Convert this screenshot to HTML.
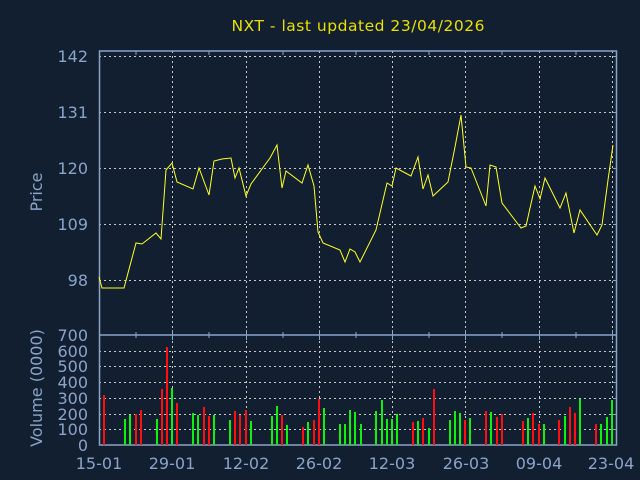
<!DOCTYPE html>
<html><head><meta charset="utf-8"><style>
html,body{margin:0;padding:0;background:#121f31;}
svg{display:block;}
text{font-family:"DejaVu Sans","Liberation Sans",sans-serif;}
</style></head><body>
<svg width="640" height="480" viewBox="0 0 640 480" xmlns="http://www.w3.org/2000/svg">
<rect width="640" height="480" fill="#121f31"/>
<text x="358" y="31" fill="#e8e000" font-size="15.5" text-anchor="middle" textLength="253">NXT - last updated 23/04/2026</text>
<g stroke="#c8c8c8" stroke-width="1" stroke-dasharray="2,3" fill="none">
<line x1="99" y1="56.5" x2="617" y2="56.5"/>
<line x1="99" y1="112.5" x2="617" y2="112.5"/>
<line x1="99" y1="168.5" x2="617" y2="168.5"/>
<line x1="99" y1="224.5" x2="617" y2="224.5"/>
<line x1="99" y1="280.5" x2="617" y2="280.5"/>
<line x1="99" y1="351.5" x2="617" y2="351.5"/>
<line x1="99" y1="366.5" x2="617" y2="366.5"/>
<line x1="99" y1="382.5" x2="617" y2="382.5"/>
<line x1="99" y1="398.5" x2="617" y2="398.5"/>
<line x1="99" y1="414.5" x2="617" y2="414.5"/>
<line x1="99" y1="429.5" x2="617" y2="429.5"/>
<line x1="172.5" y1="51" x2="172.5" y2="445"/>
<line x1="246.5" y1="51" x2="246.5" y2="445"/>
<line x1="319.5" y1="51" x2="319.5" y2="445"/>
<line x1="392.5" y1="51" x2="392.5" y2="445"/>
<line x1="465.5" y1="51" x2="465.5" y2="445"/>
<line x1="539.5" y1="51" x2="539.5" y2="445"/>
<line x1="612.5" y1="51" x2="612.5" y2="445"/>
</g>
<g stroke="#8aa4c8" stroke-width="1.5" fill="none">
<rect x="99.5" y="51" width="517" height="394"/>
<line x1="99" y1="335" x2="617" y2="335"/>
</g>
<g stroke="#8aa4c8" stroke-width="1">
<line x1="136" y1="51" x2="136" y2="55"/><line x1="209" y1="51" x2="209" y2="55"/><line x1="283" y1="51" x2="283" y2="55"/><line x1="356" y1="51" x2="356" y2="55"/><line x1="429" y1="51" x2="429" y2="55"/><line x1="502" y1="51" x2="502" y2="55"/><line x1="576" y1="51" x2="576" y2="55"/>
<line x1="136" y1="332" x2="136" y2="338"/><line x1="209" y1="332" x2="209" y2="338"/><line x1="283" y1="332" x2="283" y2="338"/><line x1="356" y1="332" x2="356" y2="338"/><line x1="429" y1="332" x2="429" y2="338"/><line x1="502" y1="332" x2="502" y2="338"/><line x1="576" y1="332" x2="576" y2="338"/>
<line x1="172.5" y1="330" x2="172.5" y2="340"/><line x1="246.5" y1="330" x2="246.5" y2="340"/><line x1="319.5" y1="330" x2="319.5" y2="340"/><line x1="392.5" y1="330" x2="392.5" y2="340"/><line x1="465.5" y1="330" x2="465.5" y2="340"/><line x1="539.5" y1="330" x2="539.5" y2="340"/><line x1="612.5" y1="330" x2="612.5" y2="340"/>
<line x1="613" y1="56.5" x2="617" y2="56.5"/><line x1="613" y1="112.5" x2="617" y2="112.5"/><line x1="613" y1="168.5" x2="617" y2="168.5"/><line x1="613" y1="224.5" x2="617" y2="224.5"/><line x1="613" y1="280.5" x2="617" y2="280.5"/>
<line x1="613" y1="351.5" x2="617" y2="351.5"/><line x1="613" y1="366.5" x2="617" y2="366.5"/><line x1="613" y1="382.5" x2="617" y2="382.5"/><line x1="613" y1="398.5" x2="617" y2="398.5"/><line x1="613" y1="414.5" x2="617" y2="414.5"/><line x1="613" y1="429.5" x2="617" y2="429.5"/>
</g>
<polyline fill="none" stroke="#ffff20" stroke-width="1" points="99,277 102,288 124,288 136,243 142,244 156,233 161,239 166,170 172,163 177,182 193,189 199,168 209,195 214,161 222,159 231,158 235,178 239,168 246,196 251,184 270,158 277,145 282,188 286,171 302,183 308,165 314,186 318,232 323,243 340,250 345,262 350,249 355,252 360,262 376,230 383,200 387,183 392,186 396,168 411,176 418,157 423,189 428,175 433,196 448,182 455,147 461,115 466,167 471,168 486,206 490,165 496,167 502,203 521,228 526,226 535,186 540,199 545,178 560,208 566,193 574,233 580,210 597,235 602,225 608,180 613,145"/>
<g stroke-width="2">
<g stroke="#ff1010">
<line x1="104" y1="395" x2="104" y2="445"/><line x1="136" y1="414" x2="136" y2="445"/><line x1="141" y1="410" x2="141" y2="445"/><line x1="162" y1="389" x2="162" y2="445"/><line x1="167" y1="347" x2="167" y2="445"/><line x1="177" y1="403" x2="177" y2="445"/><line x1="204" y1="407" x2="204" y2="445"/><line x1="209" y1="416" x2="209" y2="445"/><line x1="235" y1="411" x2="235" y2="445"/><line x1="240" y1="415" x2="240" y2="445"/><line x1="246" y1="410" x2="246" y2="445"/><line x1="282" y1="415" x2="282" y2="445"/><line x1="303" y1="427" x2="303" y2="445"/><line x1="314" y1="420" x2="314" y2="445"/><line x1="319" y1="399" x2="319" y2="445"/><line x1="413" y1="422" x2="413" y2="445"/><line x1="423" y1="418" x2="423" y2="445"/><line x1="434" y1="389" x2="434" y2="445"/><line x1="465" y1="420" x2="465" y2="445"/><line x1="486" y1="411" x2="486" y2="445"/><line x1="497" y1="417" x2="497" y2="445"/><line x1="502" y1="414" x2="502" y2="445"/><line x1="523" y1="421" x2="523" y2="445"/><line x1="533" y1="413" x2="533" y2="445"/><line x1="539" y1="424" x2="539" y2="445"/><line x1="559" y1="420" x2="559" y2="445"/><line x1="570" y1="407" x2="570" y2="445"/><line x1="575" y1="413" x2="575" y2="445"/><line x1="596" y1="424" x2="596" y2="445"/>
</g>
<g stroke="#10f010">
<line x1="125" y1="419" x2="125" y2="445"/><line x1="130" y1="415" x2="130" y2="445"/><line x1="157" y1="419" x2="157" y2="445"/><line x1="172" y1="388" x2="172" y2="445"/><line x1="193" y1="413" x2="193" y2="445"/><line x1="198" y1="415" x2="198" y2="445"/><line x1="214" y1="415" x2="214" y2="445"/><line x1="230" y1="420" x2="230" y2="445"/><line x1="251" y1="421" x2="251" y2="445"/><line x1="272" y1="416" x2="272" y2="445"/><line x1="277" y1="406" x2="277" y2="445"/><line x1="287" y1="425" x2="287" y2="445"/><line x1="308" y1="422" x2="308" y2="445"/><line x1="324" y1="408" x2="324" y2="445"/><line x1="340" y1="424" x2="340" y2="445"/><line x1="345" y1="424" x2="345" y2="445"/><line x1="350" y1="410" x2="350" y2="445"/><line x1="355" y1="412" x2="355" y2="445"/><line x1="361" y1="424" x2="361" y2="445"/><line x1="376" y1="411" x2="376" y2="445"/><line x1="382" y1="400" x2="382" y2="445"/><line x1="387" y1="419" x2="387" y2="445"/><line x1="392" y1="419" x2="392" y2="445"/><line x1="397" y1="414" x2="397" y2="445"/><line x1="418" y1="421" x2="418" y2="445"/><line x1="429" y1="428" x2="429" y2="445"/><line x1="450" y1="420" x2="450" y2="445"/><line x1="455" y1="411" x2="455" y2="445"/><line x1="460" y1="413" x2="460" y2="445"/><line x1="470" y1="418" x2="470" y2="445"/><line x1="491" y1="412" x2="491" y2="445"/><line x1="528" y1="418" x2="528" y2="445"/><line x1="544" y1="424" x2="544" y2="445"/><line x1="565" y1="416" x2="565" y2="445"/><line x1="580" y1="399" x2="580" y2="445"/><line x1="601" y1="424" x2="601" y2="445"/><line x1="607" y1="417" x2="607" y2="445"/><line x1="612" y1="400" x2="612" y2="445"/>
</g>
</g>
<g fill="#8aa4c8" font-size="16" text-anchor="end">
<text x="88" y="62">142</text><text x="88" y="118">131</text><text x="88" y="174">120</text><text x="88" y="230">109</text><text x="88" y="286">98</text>
<text x="88" y="341">700</text><text x="88" y="357">600</text><text x="88" y="372">500</text><text x="88" y="388">400</text><text x="88" y="404">300</text><text x="88" y="420">200</text><text x="88" y="435">100</text><text x="88" y="451">0</text>
</g>
<g fill="#8aa4c8" font-size="16" text-anchor="middle">
<text x="99" y="469">15-01</text><text x="172" y="469">29-01</text><text x="246" y="469">12-02</text><text x="319" y="469">26-02</text><text x="392" y="469">12-03</text><text x="466" y="469">26-03</text><text x="539" y="469">09-04</text><text x="611" y="469">23-04</text>
<text transform="translate(42,192) rotate(-90)">Price</text>
<text transform="translate(42,388) rotate(-90)">Volume (0000)</text>
</g>
</svg>
</body></html>
